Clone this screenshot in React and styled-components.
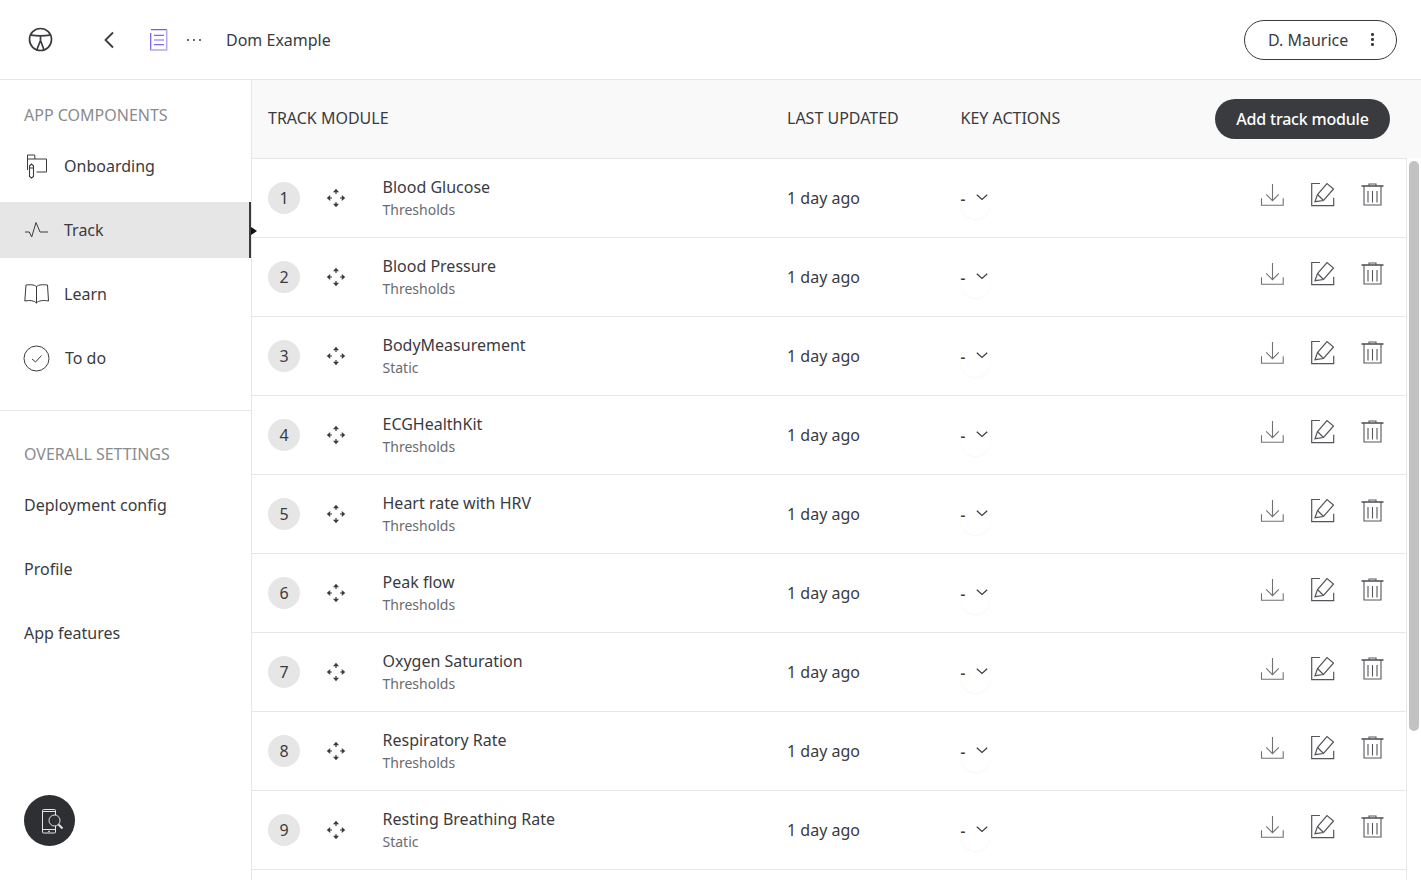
import React from "react";
import styled, {createGlobalStyle} from "styled-components";

const GlobalStyle = createGlobalStyle`
  html, body {
    margin: 0;
    height: 100%;
    overflow: hidden;
    background: #fff;
  }
  body {
    font-family: "Noto Sans", sans-serif;
    color: #3a3b3f;
  }
`;

const modules = [
    {name: "Blood Glucose", type: "Thresholds"},
    {name: "Blood Pressure", type: "Thresholds"},
    {name: "BodyMeasurement", type: "Static"},
    {name: "ECGHealthKit", type: "Thresholds"},
    {name: "Heart rate with HRV", type: "Thresholds"},
    {name: "Peak flow", type: "Thresholds"},
    {name: "Oxygen Saturation", type: "Thresholds"},
    {name: "Respiratory Rate", type: "Thresholds"},
    {name: "Resting Breathing Rate", type: "Static"},
];

const Page = styled.div`
  width: 1421px;
  height: 880px;
  display: flex;
  flex-direction: column;
  overflow: hidden;
`;

const Header = styled.header`
  height: 79px;
  flex-shrink: 0;
  display: flex;
  align-items: center;
  border-bottom: 1px solid #e6e6e6;
  padding: 0 24px 0 28px;
`;

const LogoBox = styled.div`
  width: 25px;
  height: 25px;
  margin-right: 49px;
  display: flex;
`;

const BackBox = styled.div`
  width: 14px;
  height: 20px;
  margin-right: 34px;
  display: flex;
`;

const DocBox = styled.div`
  width: 18px;
  height: 22px;
  margin-right: 19px;
  display: flex;
`;

const Dots = styled.div`
  width: 14px;
  margin-right: 25px;
  display: flex;
  justify-content: space-between;
`;

const Dot = styled.span`
  width: 2px;
  height: 2px;
  border-radius: 50%;
  background: #3a3b3f;
`;

const AppName = styled.div`
  font-size: 16px;
  flex: 1;
`;

const UserButton = styled.div`
  width: 153px;
  height: 40px;
  box-sizing: border-box;
  border: 1px solid #3a3b3f;
  border-radius: 20px;
  display: flex;
  align-items: center;
  justify-content: space-between;
  padding: 0 22.5px 0 23px;
  font-size: 16px;
`;

const VDots = styled.div`
  display: flex;
  flex-direction: column;
  gap: 2.5px;
`;

const VDot = styled.span`
  width: 2.5px;
  height: 2.5px;
  border-radius: 50%;
  background: #3a3b3f;
`;

const Body = styled.div`
  flex: 1;
  min-height: 0;
  display: flex;
`;

const Sidebar = styled.aside`
  width: 251px;
  flex-shrink: 0;
  box-sizing: content-box;
  border-right: 1px solid #e6e6e6;
  position: relative;
  z-index: 1;
`;

const SectionTitle = styled.div`
  font-size: 16px;
  line-height: 22px;
  color: #8a8b8e;
  padding-left: 24px;
`;

const TopSection = styled.div`
  padding-top: 24px;
  height: 331px;
  box-sizing: border-box;
  border-bottom: 1px solid #e6e6e6;
`;

const BottomSection = styled.div`
  padding-top: 32px;
`;

const NavList = styled.div`
  margin-top: 12px;
  display: flex;
  flex-direction: column;
  gap: 8px;
`;

const NavItem = styled.div`
  height: 56px;
  display: flex;
  align-items: center;
  padding-left: 23px;
  font-size: 16px;
  position: relative;
  background: ${props => props.$active ? "#e6e6e6" : "transparent"};
  border-right: ${props => props.$active ? "2px solid #3a3b3f" : "none"};
`;

const NavIcon = styled.span`
  width: 27px;
  height: 27px;
  margin-right: ${props => props.$gap || 14}px;
  display: flex;
  align-items: center;
  justify-content: center;
`;

const Marker = styled.span`
  position: absolute;
  right: -8px;
  top: 25px;
  width: 0;
  height: 0;
  border-top: 4px solid transparent;
  border-bottom: 4px solid transparent;
  border-left: 6px solid #111;
`;

const SettingList = styled.div`
  margin-top: 8px;
  display: flex;
  flex-direction: column;
`;

const SettingItem = styled.div`
  height: 64px;
  display: flex;
  align-items: center;
  padding-left: 24px;
  font-size: 16px;
`;

const FloatButton = styled.div`
  position: absolute;
  left: 24px;
  top: 715px;
  width: 51px;
  height: 51px;
  border-radius: 50%;
  background: #2e2f33;
  display: flex;
  align-items: center;
  justify-content: center;
`;

const Main = styled.main`
  flex: 1;
  min-width: 0;
  background: #f9f9f9;
  display: flex;
  flex-direction: column;
  position: relative;
`;

const TableHead = styled.div`
  height: 78px;
  box-sizing: border-box;
  flex-shrink: 0;
  display: flex;
  align-items: center;
  padding: 0 31px 2px 16px;
  font-size: 16px;
`;

const HeadCell = styled.div`
  width: ${props => props.$width}px;
`;

const AddButton = styled.div`
  margin-left: auto;
  width: 175px;
  height: 40px;
  margin-top: 2px;
  border-radius: 20px;
  background: #3a3b3f;
  color: #fff;
  font-size: 16px;
  font-weight: 500;
  letter-spacing: -0.2px;
  display: flex;
  align-items: center;
  justify-content: center;
`;

const TableWrap = styled.div`
  flex: 1;
  min-height: 0;
  display: flex;
  background: #fff;
`;

const Rows = styled.div`
  width: 1154px;
  border-right: 1px solid #e6e6e6;
  border-top: 1px solid #e6e6e6;
  flex-shrink: 0;
  overflow: hidden;
`;

const Row = styled.div`
  height: 78px;
  flex-shrink: 0;
  display: flex;
  align-items: center;
  border-bottom: 1px solid #e6e6e6;
  padding: 0 20.5px 0 16px;
`;

const Num = styled.div`
  width: 32px;
  height: 32px;
  border-radius: 50%;
  background: #e6e6e6;
  display: flex;
  align-items: center;
  justify-content: center;
  font-size: 16px;
  margin-right: 26px;
  flex-shrink: 0;
`;

const MoveBox = styled.div`
  width: 20px;
  height: 20px;
  margin-right: 36.5px;
  flex-shrink: 0;
  display: flex;
`;

const NameCell = styled.div`
  width: 404.5px;
  margin-top: -1px;
  flex-shrink: 0;
`;

const Name = styled.div`
  font-size: 16px;
  line-height: 22px;
`;

const Kind = styled.div`
  font-size: 14px;
  line-height: 19px;
  margin-top: 2px;
  color: #6a6b6f;
`;

const Updated = styled.div`
  width: 173.5px;
  font-size: 16px;
  flex-shrink: 0;
`;

const Actions = styled.div`
  width: 40px;
  height: 40px;
  position: relative;
  display: flex;
  align-items: center;
  gap: 11px;
  font-size: 15px;
  font-weight: 600;
  flex-shrink: 0;
`;

const ChevronBox = styled.span`
  display: flex;
  margin-top: -1px;
`;

const ActionHalo = styled.span`
  position: absolute;
  left: 0;
  top: 12px;
  width: 29px;
  height: 29px;
  border-radius: 50%;
  box-shadow: 0 1px 2px rgba(0, 0, 0, 0.04);
`;

const Tools = styled.div`
  margin-left: auto;
  display: flex;
  gap: 24px;
  margin-top: -6px;
`;

const ToolIcon = styled.span`
  width: 26px;
  height: 26px;
  display: flex;
`;

const ScrollTrack = styled.div`
  flex: 1;
  position: relative;
`;

const ScrollThumb = styled.div`
  position: absolute;
  left: 2px;
  top: 3px;
  width: 10px;
  height: 570px;
  border-radius: 5px;
  background: #c2c2c2;
`;

const IconLogo = () => (
    <svg width="25" height="25" viewBox="0 0 25 25" fill="none" stroke="#3a3b3f" strokeWidth="1.7">
        <circle cx="12.5" cy="12.5" r="11"/>
        <path d="M3 8.2C9 9 16 9 22 8.200M12.500 8.500v5M12.500 13.500L8.500 23.500M12.500 13.500l3.800 10"/>
    </svg>
);

const IconBack = () => (
    <svg width="14" height="20" viewBox="0 0 14 20" fill="none" stroke="#3a3b3f" strokeWidth="1.8">
        <path d="M11 2.500L3.500 10l7.500 7.500"/>
    </svg>
);

const IconDoc = () => (
    <svg width="18" height="22" viewBox="0 0 18 22" fill="none" strokeWidth="1.2">
        <path d="M1 .6h16M.7 4v17" stroke="#6f5cf0"/>
        <path d="M16.700 .6v20.400M0 21h17.300" stroke="#b3a9f5" strokeWidth="1.500"/>
        <path d="M4 6.300h10M4 11h10M4 15.700h10" stroke="#7b68ee"/>
    </svg>
);

const IconFolder = () => (
    <svg width="24" height="25" viewBox="0 0 24 25" fill="none" stroke="#3a3b3f" strokeWidth="1">
        <path d="M2.500 16V1h7.300v4M2.500 5h19v13H11.500"/>
        <path d="M4.500 12l2-2 2 2v10.500l-2 1.500-2-1.500zM4.500 14h4" strokeWidth="1.100"/>
    </svg>
);

const IconPulse = () => (
    <svg width="25" height="20" viewBox="0 0 25 20" fill="none" stroke="#3a3b3f" strokeWidth="1">
        <path d="M1 12h4.300l2.400 5L12 2.500l4 9.500h8"/>
    </svg>
);

const IconBook = () => (
    <svg width="26" height="24" viewBox="0 0 26 24" fill="none" stroke="#3a3b3f" strokeWidth="1">
        <path d="M12.500 4.500C10.500 2.500 5.500 2.500 2 3L.8 19C5.500 18 10.500 18.500 12.500 21C14.500 18.500 19.500 18 24.500 19L23.500 3C19.500 2.500 14.500 2.500 12.500 4.500ZM12.500 4.500V21"/>
    </svg>
);

const IconCheck = () => (
    <svg width="27" height="27" viewBox="0 0 27 27" fill="none" stroke="#3a3b3f" strokeWidth="1">
        <circle cx="13.500" cy="13.500" r="12.500"/>
        <path d="M9 14l3.500 3L18.500 10.500"/>
    </svg>
);

const IconPhoneSearch = () => (
    <svg width="28" height="26" viewBox="0 0 28 26" fill="none" stroke="#e6e6e6" strokeWidth="1">
        <path d="M19.500 7V2.500a1 1 0 0 0-1-1h-11a1 1 0 0 0-1 1v21.500a1 1 0 0 0 1 1h11a1 1 0 0 0 1-1V18"/>
        <path d="M6.500 3.500h13M6.500 21.500h13M12 23.300h2"/>
        <circle cx="18.500" cy="12.500" r="5.500"/>
        <path d="M22.500 16.500L26.500 20.500" strokeWidth="2"/>
    </svg>
);

const IconMove = () => (
    <svg width="20" height="20" viewBox="0 0 20 20" fill="none" stroke="#3a3b3f" strokeWidth="1.200">
        <path d="M10 6V3M14 10h3M10 14v3M6 10H3"/>
        <path d="M10 .8l3 3.400H7zM19.200 10l-3.400 3V7zM10 19.200l-3-3.400h6zM.8 10l3.400-3v6z" fill="#3a3b3f" stroke="none"/>
    </svg>
);

const IconChevron = () => (
    <svg width="12" height="7" viewBox="0 0 12 7" fill="none" stroke="#3a3b3f" strokeWidth="1.200">
        <path d="M.8 .8L6 5.500 11.200 .8"/>
    </svg>
);

const IconDownload = () => (
    <svg width="26" height="26" viewBox="0 0 26 26" fill="none" stroke="#707174" strokeWidth="1.100">
        <path d="M12.500 2V18.500M6.200 12.300l6.300 6.400 6.300-6.400M1.500 16.300v7h21.700v-7"/>
    </svg>
);

const IconEdit = () => (
    <svg width="26" height="26" viewBox="0 0 26 26" fill="none" stroke="#55565a" strokeWidth="1.200">
        <path d="M10 1.500H1.700v22.100h22V15.700"/>
        <path d="M5 19.700L7.500 12.500 17 1.500 23.500 7 13.500 18.500z"/>
        <path d="M7.500 12.500l6 6"/>
    </svg>
);

const IconTrash = () => (
    <svg width="26" height="26" viewBox="0 0 26 26" fill="none" stroke="#55565a" strokeWidth="1.100">
        <path d="M1.500 4h22" strokeWidth="1.600"/>
        <path d="M9 4V2h7v2M4 4v19h17V4"/>
        <path d="M8 9v11.500M12.500 9v11.500M17 9v11.500"/>
    </svg>
);

const App = () => {
    return (
        <Page>
            <GlobalStyle/>
            <Header>
                <LogoBox><IconLogo/></LogoBox>
                <BackBox><IconBack/></BackBox>
                <DocBox><IconDoc/></DocBox>
                <Dots><Dot/><Dot/><Dot/></Dots>
                <AppName>Dom Example</AppName>
                <UserButton>
                    D. Maurice
                    <VDots><VDot/><VDot/><VDot/></VDots>
                </UserButton>
            </Header>
            <Body>
                <Sidebar>
                    <TopSection>
                        <SectionTitle>APP COMPONENTS</SectionTitle>
                        <NavList>
                            <NavItem><NavIcon><IconFolder/></NavIcon>Onboarding</NavItem>
                            <NavItem $active><NavIcon><IconPulse/></NavIcon>Track<Marker/></NavItem>
                            <NavItem><NavIcon><IconBook/></NavIcon>Learn</NavItem>
                            <NavItem><NavIcon $gap={15}><IconCheck/></NavIcon>To do</NavItem>
                        </NavList>
                    </TopSection>
                    <BottomSection>
                        <SectionTitle>OVERALL SETTINGS</SectionTitle>
                        <SettingList>
                            <SettingItem>Deployment config</SettingItem>
                            <SettingItem>Profile</SettingItem>
                            <SettingItem>App features</SettingItem>
                        </SettingList>
                    </BottomSection>
                    <FloatButton><IconPhoneSearch/></FloatButton>
                </Sidebar>
                <Main>
                    <TableHead>
                        <HeadCell $width={519}>TRACK MODULE</HeadCell>
                        <HeadCell $width={173.5}>LAST UPDATED</HeadCell>
                        <HeadCell $width={120}>KEY ACTIONS</HeadCell>
                        <AddButton>Add track module</AddButton>
                    </TableHead>
                    <TableWrap>
                        <Rows>
                            {modules.map((module, i) => (
                                <Row key={module.name}>
                                    <Num>{i + 1}</Num>
                                    <MoveBox><IconMove/></MoveBox>
                                    <NameCell>
                                        <Name>{module.name}</Name>
                                        <Kind>{module.type}</Kind>
                                    </NameCell>
                                    <Updated>1 day ago</Updated>
                                    <Actions>
                                        - <ChevronBox><IconChevron/></ChevronBox>
                                        <ActionHalo/>
                                    </Actions>
                                    <Tools>
                                        <ToolIcon><IconDownload/></ToolIcon>
                                        <ToolIcon><IconEdit/></ToolIcon>
                                        <ToolIcon><IconTrash/></ToolIcon>
                                    </Tools>
                                </Row>
                            ))}
                        </Rows>
                        <ScrollTrack><ScrollThumb/></ScrollTrack>
                    </TableWrap>
                </Main>
            </Body>
        </Page>
    );
};

export default App;
